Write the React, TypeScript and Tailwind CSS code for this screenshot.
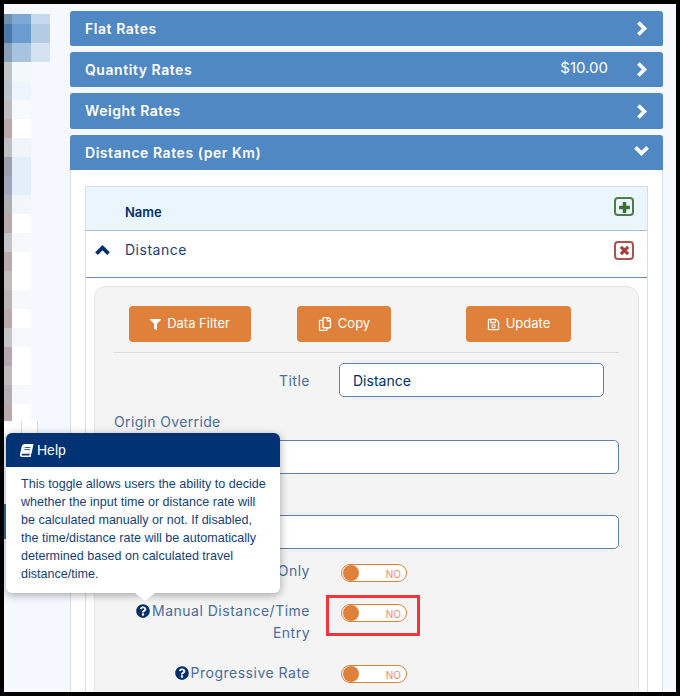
import { FaBook, FaFilter, FaQuestionCircle, FaRegCopy, FaRegSave } from "react-icons/fa";

const mosaic = [
  ["h-[10px]", "bg-[#6e8fb0]", "bg-[#7fa8d4]", "bg-[#c6d9ec]"],
  ["h-[19px]", "bg-[#4b78a8]", "bg-[#6a9ccf]", "bg-[#b4cbe4]"],
  ["h-[19px]", "bg-[#88a0b8]", "bg-[#a8c3e0]", "bg-[#d5e2f1]"],
  ["h-[19px]", "bg-[#c1c4c6]", "bg-[#f3f8fb]"],
  ["h-[19px]", "bg-[#b8c3cc]", "bg-[#eef5fc]"],
  ["h-[19px]", "bg-[#bdbdbf]", "bg-[#f8f9fb]"],
  ["h-[19px]", "bg-[#b9a8ac]", "bg-[#ffffff]"],
  ["h-[19px]", "bg-[#bcc0c3]", "bg-[#f1f4f8]"],
  ["h-[19px]", "bg-[#9d9fae]", "bg-[#e4eef8]"],
  ["h-[19px]", "bg-[#a2a8bb]", "bg-[#e4eef8]"],
  ["h-[19px]", "bg-[#afb0b5]", "bg-[#f2f5f9]"],
  ["h-[19px]", "bg-[#b9a9aa]", "bg-[#ffffff]"],
  ["h-[19px]", "bg-[#c3c4c7]", "bg-[#f6f8fa]"],
  ["h-[19px]", "bg-[#b9a9ab]", "bg-[#ffffff]"],
  ["h-[19px]", "bg-[#c2bcbd]", "bg-[#ffffff]"],
  ["h-[19px]", "bg-[#bbb4b7]", "bg-[#f6f8fa]"],
  ["h-[19px]", "bg-[#b9a9ab]", "bg-[#ffffff]"],
  ["h-[19px]", "bg-[#c4c4c7]", "bg-[#f6f8fa]"],
  ["h-[19px]", "bg-[#b6a7ae]", "bg-[#ffffff]"],
  ["h-[19px]", "bg-[#c1babd]", "bg-[#ffffff]"],
  ["h-[19px]", "bg-[#b5afb3]", "bg-[#f6f8fa]"],
  ["h-[17px]", "bg-[#b8aaad]", "bg-[#ffffff]"],
];

const Mosaic = () => {
  return (
    <div className="-ml-[2px] flex w-[68px] shrink-0 flex-col pt-[10px]">
      {mosaic.map((row, i) => (
        <div key={i} className={`flex shrink-0 ${row[0]}`}>
          <div className={`w-[10px] ${row[1]}`} />
          <div className={`w-[19px] ${row[2]}`} />
          {row[3] && <div className={`w-[19px] ${row[3]}`} />}
        </div>
      ))}
      <div className="ml-[2px] flex h-[13px] w-[34px] shrink-0 bg-white">
        <div className="w-[18px] border-r border-[#d8d8d8]" />
        <div className="w-[16px] border-r border-[#d8d8d8]" />
      </div>
      <div className="ml-[2px] mt-[70px] h-[35px] w-[6px] shrink-0 bg-[#3a6ea5]" />
    </div>
  );
};

const Chevron = ({ points, className }: { points: string; className: string }) => {
  return (
    <svg viewBox="0 0 16 16" className={className} fill="none" stroke="currentColor" strokeWidth="4" strokeLinecap="square">
      <polyline points={points} />
    </svg>
  );
};

const Bar = ({ title, h, value, open, titleClass }: { title: string; h: string; value?: string; open?: boolean; titleClass?: string }) => {
  return (
    <div className={`flex items-center rounded-t-[3px] bg-[#4f88c2] pl-[15px] text-white ${h} ${open ? "" : "rounded-b-[2px]"}`}>
      <span className={`text-[14px] font-semibold tracking-[0.55px] ${titleClass ?? ""}`}>{title}</span>
      {value && <span className="ml-auto -mt-[3px] text-[15px]">{value}</span>}
      {open ? (
        <Chevron points="3,5 8,10 13,5" className="ml-auto mr-[14px] -mt-[3px] h-[15px] w-[15px]" />
      ) : (
        <Chevron points="5,3 10,8 5,13" className={`mr-[13px] h-[15px] w-[15px] ${value ? "ml-[27px]" : "ml-auto"}`} />
      )}
    </div>
  );
};

const ActionButton = ({ icon, label, w }: { icon: React.ReactNode; label: string; w: string }) => {
  return (
    <div className={`flex h-[36px] items-center justify-center gap-[6px] rounded-[4px] bg-[#e0813b] text-[13px] text-white ${w}`}>
      {icon}
      <span>{label}</span>
    </div>
  );
};

const Toggle = () => {
  return (
    <div className="flex h-[18px] w-[66px] items-center rounded-full border border-[#e0813b] bg-white pl-[1px] pr-[5px]">
      <div className="h-[16px] w-[16px] rounded-full bg-[#e0813b]" />
      <span className="ml-auto mt-[2px] text-[10px] text-[#e88a6a]">NO</span>
    </div>
  );
};

const App = () => {
  return (
    <div className="h-[696px] w-[680px] overflow-hidden bg-black pb-[4px] pl-[4px] pr-[4px] pt-[4px] font-['Inter',sans-serif]">
      <div className="relative flex h-[688px] overflow-hidden bg-[#f5f9ff]">
        <Mosaic />

        <div className="w-[593px] shrink-0 pt-[7px]">
          <Bar title="Flat Rates" h="h-[35px]" />
          <div className="mt-[6px]">
            <Bar title="Quantity Rates" h="h-[35px]" value="$10.00" />
          </div>
          <div className="mt-[6px]">
            <Bar title="Weight Rates" h="h-[36px]" titleClass="-mt-[1px]" />
          </div>
          <div className="mt-[6px]">
            <Bar title="Distance Rates (per Km)" h="h-[35px]" open />
          </div>

          <div className="border-x border-[#d8dee6] bg-white px-[14px] pt-[16px]">
            <div className="border-x border-[#d8dee6]">
              <div className="flex h-[45px] items-center border-y border-t-[#d8dee6] border-b-[#a3bedd] bg-[#eaf5fe] pl-[39px] pr-[13px] text-[13px] font-semibold text-[#002f6c]">
                <span className="mt-[9px]">Name</span>
                <div className="ml-auto -mt-[4px] flex h-[19px] w-[20px] items-center justify-center rounded-[4px] border-2 border-[#4f7d4a] text-[#3b7034]">
                  <svg viewBox="0 0 12 12" className="mt-[2px] h-[13px] w-[13px]" fill="none" stroke="currentColor" strokeWidth="3.2">
                    <path d="M6 1v10M1 6h10" />
                  </svg>
                </div>
              </div>
              <div className="flex h-[47px] items-center border-b border-[#6a8ab5] pl-[9px] pr-[13px] text-[14px] tracking-[0.5px] text-[#1d4175]">
                <Chevron points="3,11 8,6 13,11" className="-mt-[9px] h-[15px] w-[15px] text-[#002f6c]" />
                <span className="ml-[15px] -mt-[9px]">Distance</span>
                <div className="ml-auto -mt-[8px] flex h-[19px] w-[20px] items-center justify-center rounded-[4px] border-2 border-[#a8554c] text-[#a8403c]">
                  <svg viewBox="0 0 12 12" className="mt-[1px] h-[11px] w-[11px]" fill="none" stroke="currentColor" strokeWidth="3.4">
                    <path d="M2 2l8 8M10 2l-8 8" />
                  </svg>
                </div>
              </div>

              <div className="ml-[8px] mr-[8px] mt-[8px] h-[420px] rounded-t-[12px] border border-[#e5e5e5] bg-[#f4f4f4] px-[19px] pt-[19px]">
                <div className="flex border-b border-[#dcdcdc] pb-[10px] pl-[15px]">
                  <ActionButton w="w-[122px]" label="Data Filter" icon={<FaFilter className="text-[11px]" />} />
                  <div className="ml-[46px]">
                    <ActionButton w="w-[94px]" label="Copy" icon={<FaRegCopy className="text-[14px]" />} />
                  </div>
                  <div className="ml-[75px]">
                    <ActionButton w="w-[105px]" label="Update" icon={<FaRegSave className="text-[13px]" />} />
                  </div>
                </div>

                <div className="mt-[10px] flex items-center">
                  <span className="w-[196px] text-right text-[14px] tracking-[0.5px] text-[#4a6d9c]">Title</span>
                  <div className="ml-[29px] flex h-[34px] w-[265px] items-center rounded-[5px] border border-[#5f80ad] bg-white pl-[13px] text-[14px] text-[#002f6c]">
                    Distance
                  </div>
                </div>

                <div className="mt-[15px] text-[14px] leading-[20px] tracking-[0.35px] text-[#4a6d9c]">Origin Override</div>
                <div className="mt-[8px] h-[34px] w-[505px] rounded-[5px] border border-[#5f80ad] bg-white" />
                <div className="mt-[41px] h-[34px] w-[505px] rounded-[5px] border border-[#5f80ad] bg-white" />

                <div className="mt-[15px] flex">
                  <span className="-mt-[2px] w-[196px] text-right text-[14px] leading-[18px] tracking-[0.5px] text-[#4a6d9c]">Only</span>
                  <div className="ml-[31px]">
                    <Toggle />
                  </div>
                </div>

                <div className="relative mt-[22px] flex">
                  <div className="-mt-[4px] w-[196px] text-right text-[14px] leading-[22px] tracking-[0.5px] text-[#4a6d9c]">
                    <FaQuestionCircle className="mb-[2px] mr-[2px] inline text-[14px] text-[#002f6c]" />
                    Manual Distance/Time Entry
                  </div>
                  <div className="ml-[31px]">
                    <Toggle />
                  </div>
                  <div className="absolute left-[212px] top-[-9px] h-[41px] w-[94px] border-[3px] border-[#f5333a]" />
                </div>

                <div className="mt-[21px] flex">
                  <div className="-mt-[1px] w-[196px] text-right text-[14px] leading-[18px] tracking-[0.5px] text-[#4a6d9c]">
                    <FaQuestionCircle className="mb-[2px] mr-[2px] inline text-[14px] text-[#002f6c]" />
                    Progressive Rate
                  </div>
                  <div className="ml-[31px]">
                    <Toggle />
                  </div>
                </div>
              </div>
            </div>
          </div>
        </div>

        {/* help popover */}
        <div className="absolute left-[2px] top-[429px] w-[274px] rounded-[6px] bg-white font-['Liberation_Sans',sans-serif] shadow-[0_2px_8px_rgba(0,0,0,0.35)]">
          <div className="flex h-[34px] items-center gap-[4px] rounded-t-[6px] bg-[#003274] pl-[14px] text-[14px] text-white">
            <FaBook className="-skew-x-12 text-[13px]" />
            <span>Help</span>
          </div>
          <div className="pb-[10px] pl-[15px] pr-[12px] pt-[8px] text-[12.55px] leading-[18px] text-[#123f7a]">
            This toggle allows users the ability to decide whether the input time or distance rate will be calculated manually or not. If disabled, the time/distance rate will be automatically determined based on calculated travel distance/time.
          </div>
          <div className="absolute -bottom-[8px] left-[129px] h-0 w-0 border-x-[10px] border-t-[8px] border-x-transparent border-t-white" />
        </div>
      </div>
    </div>
  );
};

export default App;
